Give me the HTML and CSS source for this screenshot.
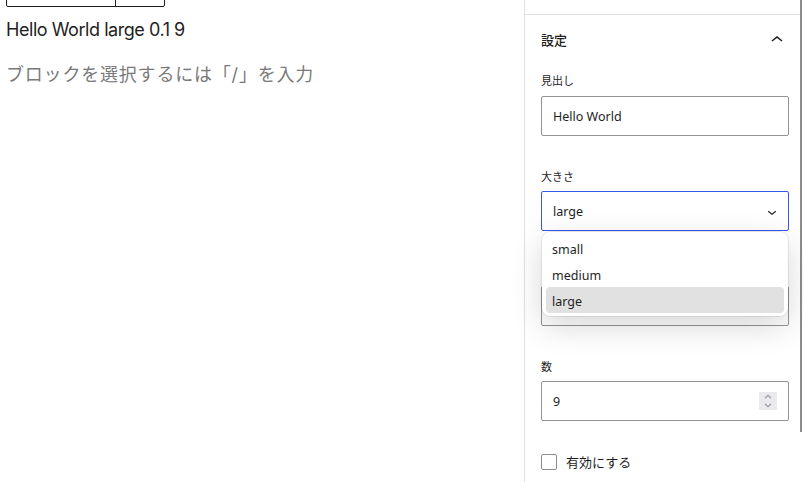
FILE: index.html
```html
<!DOCTYPE html>
<html lang="ja">
<head>
<meta charset="utf-8">
<title>Editor</title>
<link rel="stylesheet" href="styles.css">
</head>
<body>
<div class="app">
  <main class="canvas">
    <div class="toolbar"><span class="tb-a"></span><span class="tb-b"></span></div>
    <p class="line">Hello World large 0.1 9</p>
    <p class="placeholder">ブロックを選択するには「/」を入力</p>
  </main>
  <aside class="sidebar">
    <div class="tabs"></div>
    <section class="panel">
      <div class="panel-head">
        <span>設定</span>
        <svg class="icon-up" width="24" height="24" viewBox="0 0 24 24"><path d="M6.5 12.4L12 8l5.5 4.4-.9 1.2L12 10l-4.6 3.6-1-1.2z"/></svg>
      </div>
      <div class="panel-body">
        <div class="field">
          <span class="label">見出し</span>
          <div class="control">Hello World</div>
        </div>
        <div class="field">
          <span class="label">大きさ</span>
          <div class="control select">
            <span class="value">large</span>
            <svg class="icon-down" width="18" height="18" viewBox="0 0 24 24"><path d="M17.5 11.6L12 16l-5.5-4.4.9-1.2L12 14l4.6-3.6 1 1.2z"/></svg>
            <div class="menu">
              <div class="option">small</div>
              <div class="option">medium</div>
              <div class="option selected">large</div>
            </div>
          </div>
        </div>
        <div class="field">
          <span class="label"></span>
          <div class="control"></div>
        </div>
        <div class="field last">
          <span class="label">数</span>
          <div class="control number">
            <span class="value">9</span>
            <span class="spin"><svg width="18" height="18" viewBox="0 0 18 18"><path d="M6 6.2L9 3.4l3 2.8M6 11.8L9 14.6l3-2.8"/></svg></span>
          </div>
        </div>
        <label class="check">
          <span class="box"></span>
          <span class="check-text">有効にする</span>
        </label>
      </div>
    </section>
  </aside>
  <div class="scroll"><div class="thumb"></div></div>
</div>
</body>
</html>
```

FILE: styles.css
```css
* {
  box-sizing: border-box;
}

html,
body {
  margin: 0;
  height: 100%;
  background: #fff;
}

body {
  font-family: "Noto Sans", "Noto Sans CJK JP", sans-serif;
  color: #1e1e1e;
  overflow: hidden;
}

.app {
  display: flex;
  height: 482px;
}

.canvas {
  width: 524px;
  flex: none;
  padding-left: 6px;
  overflow: hidden;
}

.toolbar {
  display: flex;
  width: 159px;
  height: 48px;
  margin-top: -41px;
  border: 1px solid #1e1e1e;
  border-radius: 2px;
}

.tb-a {
  width: 109px;
  border-right: 1px solid #1e1e1e;
}

.line {
  margin: 9px 0 0;
  font: 18px/27px Inter, "Noto Sans CJK JP", sans-serif;
  letter-spacing: -0.45px;
  color: #1e1e1e;
}

.placeholder {
  margin: 18px 0 0;
  font: 18px/27px Inter, "Noto Sans CJK JP", sans-serif;
  letter-spacing: 0.8px;
  color: #7a7a7a;
}

.sidebar {
  width: 276px;
  flex: none;
  border-left: 1px solid #e0e0e0;
}

.tabs {
  height: 15px;
  border-bottom: 1px solid #e0e0e0;
}

.panel-head {
  height: 52px;
  display: flex;
  align-items: center;
  justify-content: space-between;
  padding: 0 11px 3px 16px;
  font-size: 13px;
  font-weight: 500;
  font-family: "Noto Sans CJK JP", sans-serif;
}

.icon-up {
  fill: #1e1e1e;
}

.panel-body {
  padding: 5px 11px 0 16px;
}

.field {
  margin-bottom: 32px;
}

.field.last {
  margin-bottom: 33px;
}

.label {
  display: block;
  height: 16px;
  font-family: "Noto Sans CJK JP", sans-serif;
  font-size: 11px;
  line-height: 16px;
  margin-bottom: 8px;
}

.field + .field .label {
  margin-bottom: 7px;
}

.control {
  position: relative;
  height: 40px;
  display: flex;
  align-items: center;
  padding: 1px 11px 0;
  border: 1px solid #949494;
  border-radius: 2px;
  font-size: 12.5px;
}

.select {
  border-color: #3858e9;
  justify-content: space-between;
  padding-right: 7px;
}

.icon-down {
  fill: #1e1e1e;
}

.menu {
  position: absolute;
  left: 0;
  right: 0;
  top: calc(100% + 2px);
  padding: 3px 4px;
  background: #fff;
  border-radius: 8px;
  box-shadow: 0 0 0 1px rgba(0, 0, 0, 0.08), 0 10px 32px rgba(0, 0, 0, 0.16);
  z-index: 2;
}

.option {
  height: 26px;
  line-height: 26px;
  padding: 2px 0 0 6px;
  border-radius: 4px;
}

.option.selected {
  background: #e1e1e1;
}

.number {
  justify-content: space-between;
}

.spin {
  width: 18px;
  height: 18px;
  margin-top: -1px;
  background: #e9e9ef;
  border-radius: 1px;
  display: flex;
}

.spin path {
  fill: none;
  stroke: #9a9a9a;
  stroke-width: 1.2;
}

.check {
  display: flex;
  align-items: center;
  gap: 9px;
  height: 16px;
}

.box {
  width: 16px;
  height: 16px;
  border: 1.5px solid #8c8c8c;
  border-radius: 2px;
}

.check-text {
  font-family: "Noto Sans CJK JP", sans-serif;
  font-size: 13px;
  line-height: 16px;
}

.scroll {
  width: 3px;
  flex: none;
}

.thumb {
  width: 2px;
  height: 432px;
  background: #8d8d8d;
}
```
